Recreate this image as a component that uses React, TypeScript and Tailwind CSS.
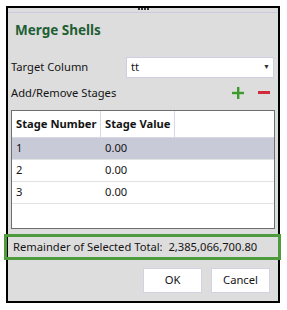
const rows = [
  { stage: '1', value: '0.00', selected: true },
  { stage: '2', value: '0.00', selected: false },
  { stage: '3', value: '0.00', selected: false },
];

export default function App() {
  return (
    <div className="w-[287px] h-[310px] bg-white pt-[6px] pl-[6px] font-['Noto_Sans','Open_Sans',sans-serif] text-[11.2px] text-[#141414]">
      <div className="w-[274px] h-[297px] border-2 border-black bg-[#dddddd] flex flex-col">
        {/* grip */}
        <div className="h-[3px] flex justify-center gap-[1px]">
          {[0, 1, 2, 3].map((i) => (
            <span key={i} className="w-[2px] h-[2px] bg-[#333]" />
          ))}
        </div>
        <div className="h-px mt-[1px] bg-[#cdcbe0]" />

        <h1 className="mt-[8px] ml-[7px] text-[13.5px] leading-[19px] font-bold text-[#1f5f35]">Merge Shells</h1>

        <div className="mt-[17px] flex items-center pl-[3px] pr-[4px]">
          <span className="w-[115px]">Target Column</span>
          <div className="flex-1 h-[21px] bg-white border border-[#cfcfe0] flex items-center pl-[4px] pr-[3px]">
            <span className="flex-1">tt</span>
            <span className="text-[7px] text-[#333]">▼</span>
          </div>
        </div>

        <div className="mt-[4px] h-[22px] flex items-center pl-[3px] pr-[8px]">
          <span className="flex-1">Add/Remove Stages</span>
          <svg width="12" height="12" viewBox="0 0 12 12" className="mr-[14px]">
            <rect x="5" y="0" width="2.4" height="12" fill="#3e9a2f" />
            <rect x="0" y="4.8" width="12" height="2.4" fill="#3e9a2f" />
          </svg>
          <svg width="12" height="4" viewBox="0 0 12 4">
            <rect x="0" y="0" width="12" height="3" fill="#d22b3a" />
          </svg>
        </div>

        <div className="mt-[6px] mx-[3px] h-[119px] border border-[#6e6e6e] bg-white">
          <div className="flex h-[27px] border-b border-[#d8d8e4] font-bold whitespace-nowrap">
            <div className="w-[89px] pl-[4px] flex items-center border-r border-[#d8d8e4]">Stage Number</div>
            <div className="w-[74px] pl-[4px] flex items-center border-r border-[#d8d8e4]">Stage Value</div>
          </div>
          {rows.map((r) => (
            <div
              key={r.stage}
              className={`flex h-[22px] border-b border-[#e2e2e2] ${r.selected ? 'bg-[#c9cad8]' : ''}`}
            >
              <div className="w-[89px] pl-[4px] flex items-center">{r.stage}</div>
              <div className="w-[74px] pl-[4px] flex items-center">{r.value}</div>
            </div>
          ))}
        </div>

        <div className="mt-[5px] -ml-[4px] -mr-[3px] h-[26px] border-[3px] border-[#4d9b3c] flex items-center pl-[6px]">
          <span>Remainder of Selected Total:&nbsp;&nbsp;2,385,066,700.80</span>
        </div>

        <div className="mt-[8px] flex justify-end gap-[9px] pr-[8px]">
          <button className="w-[59px] h-[25px] bg-white border border-[#d2d2e2]">OK</button>
          <button className="w-[59px] h-[25px] bg-white border border-[#d2d2e2]">Cancel</button>
        </div>
      </div>
    </div>
  );
}
